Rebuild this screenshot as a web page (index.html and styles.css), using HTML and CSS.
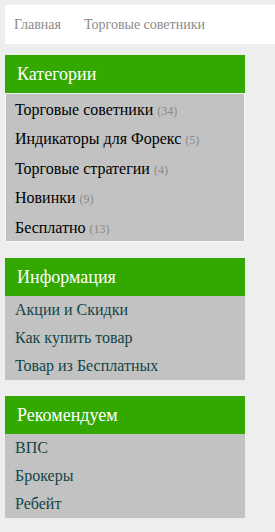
FILE: index.html
```html
<!DOCTYPE html>
<html lang="ru">
<head>
    <meta charset="UTF-8">
    <meta name="viewport" content="width=device-width, initial-scale=1.0">
    <title>Магазин советников</title>
    <link rel="stylesheet" href="styles.css">
</head>
<body>

<div class="topnav">
    <a href="#">Главная</a>
    <a href="#">Торговые советники</a>
</div>

<div class="widget">
    <h3 class="widget-title">Категории</h3>
    <ul class="widget-list categories">
        <li><a href="#">Торговые советники</a> <span class="count">(34)</span></li>
        <li><a href="#">Индикаторы для Форекс</a> <span class="count">(5)</span></li>
        <li><a href="#">Торговые стратегии</a> <span class="count">(4)</span></li>
        <li><a href="#">Новинки</a> <span class="count">(9)</span></li>
        <li><a href="#">Бесплатно</a> <span class="count">(13)</span></li>
    </ul>
</div>

<div class="widget">
    <h3 class="widget-title">Информация</h3>
    <ul class="widget-list">
        <li><a href="#">Акции и Скидки</a></li>
        <li><a href="#">Как купить товар</a></li>
        <li><a href="#">Товар из Бесплатных</a></li>
    </ul>
</div>

<div class="widget">
    <h3 class="widget-title">Рекомендуем</h3>
    <ul class="widget-list">
        <li><a href="#">ВПС</a></li>
        <li><a href="#">Брокеры</a></li>
        <li><a href="#">Ребейт</a></li>
    </ul>
</div>

</body>
</html>
```

FILE: styles.css
```css
html {
    overflow-x: hidden;
}

body {
    font-family: "Liberation Serif", "Times New Roman", serif;
    background-color: #eeeeee;
    margin: 5px 0 0 5px;
}

a {
    text-decoration: none;
}

.topnav {
    background-color: white;
    height: 39px;
    display: flex;
    align-items: center;
    padding-left: 9px;
    gap: 23px;
    margin-bottom: 11px;
}

.topnav a {
    color: #8a8a8a;
    font-size: 14px;
}

.widget {
    width: 240px;
    margin-bottom: 16px;
}

.widget-title {
    margin: 0;
    background-color: #33a800;
    color: white;
    font-weight: normal;
    font-size: 18px;
    height: 38px;
    line-height: 38px;
    padding-left: 12px;
}

.widget-list {
    list-style: none;
    margin: 0;
    padding: 0;
    background-color: #c2c2c2;
}

.widget-list li {
    font-size: 16px;
    line-height: 18px;
    padding: 5px 10px;
}

.widget-list a {
    color: #134545;
}

.categories {
    margin-top: 1px;
    border: 1px solid #f6f6f6;
    border-top: none;
}

.categories li {
    padding: 7px 9px 4px;
    line-height: 18.4px;
}

.categories a {
    color: #000;
}

.count {
    color: #8a8a8a;
    font-size: 12px;
    line-height: 1;
}
```
